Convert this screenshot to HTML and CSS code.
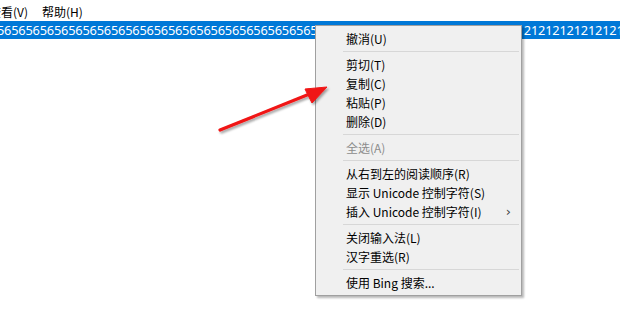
FILE: index.html
```html
<!DOCTYPE html>
<html lang="zh-CN">

<head>
    <meta charset="UTF-8">
    <meta name="viewport" content="width=device-width, initial-scale=1.0">
    <title>记事本 - 右键菜单</title>
    <link rel="stylesheet" href="styles.css">
</head>

<body>
    <div class="menubar">
        <span class="menubar-item">查看(V)</span>
        <span class="menubar-item">帮助(H)</span>
    </div>

    <div class="editor">
        <div class="line selected">56565656565656565656565656565656565656565656565656212121212121212121212121212121212121212121212121212121212121</div>
    </div>

    <div class="context-menu">
        <div class="item">撤消(U)</div>
        <div class="sep"></div>
        <div class="item">剪切(T)</div>
        <div class="item">复制(C)</div>
        <div class="item">粘贴(P)</div>
        <div class="item">删除(D)</div>
        <div class="sep"></div>
        <div class="item disabled">全选(A)</div>
        <div class="sep"></div>
        <div class="item">从右到左的阅读顺序(R)</div>
        <div class="item">显示 Unicode 控制字符(S)</div>
        <div class="item has-sub">插入 Unicode 控制字符(I)<span class="sub-arrow">›</span></div>
        <div class="sep"></div>
        <div class="item">关闭输入法(L)</div>
        <div class="item">汉字重选(R)</div>
        <div class="sep"></div>
        <div class="item">使用 Bing 搜索...</div>
    </div>

    <!-- red annotation arrow pointing at 复制 -->
    <svg class="annotation" width="620" height="309" viewBox="0 0 620 309">
        <defs>
            <filter id="arrow-shadow" x="-20%" y="-50%" width="140%" height="200%">
                <feDropShadow dx="1.5" dy="2" stdDeviation="1.2" flood-color="#000" flood-opacity="0.35" />
            </filter>
        </defs>
        <g filter="url(#arrow-shadow)" fill="#f01414" stroke="#f01414">
            <line x1="220" y1="130" x2="312" y2="93" stroke-width="3.2" stroke-linecap="round" />
            <polygon points="327,87 305,89 312,103" stroke-width="1" stroke-linejoin="round" />
        </g>
    </svg>
</body>

</html>
```

FILE: styles.css
```css
body {
    margin: 0;
    background: #fff;
    width: 620px;
    height: 309px;
    overflow: hidden;
    position: relative;
    font-family: "Noto Sans CJK SC", "Noto Sans", sans-serif;
}

.menubar {
    display: flex;
    height: 19px;
    padding-top: 2px;
    align-items: center;
    margin-left: -11px;
    font-size: 12px;
    color: #000;
}

.menubar-item {
    padding: 0 8px 0 0;
    margin-right: 6px;
    line-height: 19px;
}

.editor {
    overflow: hidden;
}

.line {
    white-space: nowrap;
    font-family: "Noto Sans", "Open Sans", sans-serif;
    font-size: 12.8px;
    line-height: 18px;
    height: 18px;
    margin-left: -3px;
    letter-spacing: -0.2px;
}

.selected {
    background: #0078d7;
    color: #fff;
}

.context-menu {
    position: absolute;
    left: 315px;
    top: 25px;
    width: 205px;
    padding: 3px 0;
    background: #f0f0f0;
    border: 1px solid #a0a0a0;
    box-shadow: 2px 2px 2px rgba(0, 0, 0, 0.28);
    font-size: 12px;
    color: #000;
}

.item {
    position: relative;
    height: 19px;
    line-height: 19px;
    padding-left: 30px;
    white-space: nowrap;
}

.item.disabled {
    color: #8c8c8c;
}

.sub-arrow {
    position: absolute;
    right: 10px;
    top: 0;
    font-family: "DejaVu Sans", sans-serif;
    font-size: 13px;
    color: #444;
}

.sep {
    height: 7px;
    margin: 0 2px 0 27px;
    position: relative;
}

.sep::after {
    content: "";
    position: absolute;
    left: 0;
    right: 0;
    top: 3px;
    border-top: 1px solid #d7d7d7;
}

.annotation {
    position: absolute;
    left: 0;
    top: 0;
    pointer-events: none;
}
```
